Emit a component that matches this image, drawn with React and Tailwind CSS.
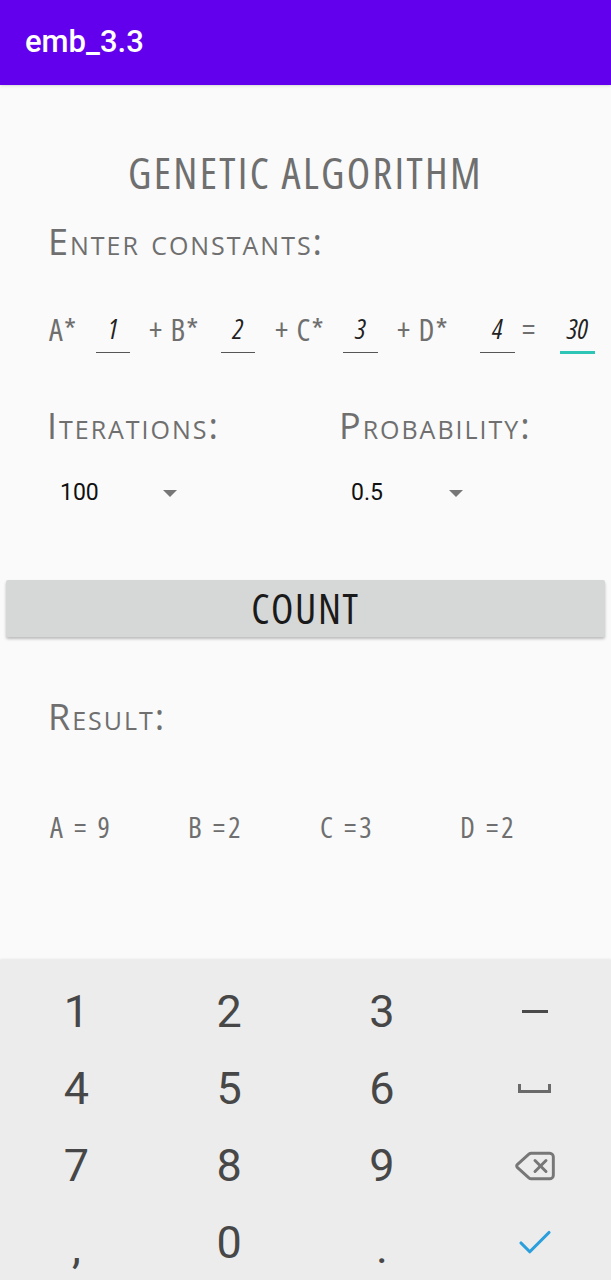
import { Check, Delete } from "lucide-react";

const cond = "font-['Open_Sans',sans-serif] [font-stretch:75%]";
const caps = "[font-stretch:100%] [font-variant:small-caps] text-[36px] leading-[46px] tracking-[0.055em]";

const Field = ({ value, w = "w-[34px]", active }) => (
  <div className={`${w} flex flex-col items-center`}>
    <span className="italic text-[27px] leading-[36px] tracking-normal text-[#222]">{value}</span>
    <div className={active ? "mt-[4px] h-[3px] w-full bg-[#2ec4b6]" : "mt-[5px] h-px w-full bg-[#555]"} />
  </div>
);

const Spinner = ({ value, w = "w-[103px]" }) => (
  <div className="flex items-center">
    <span className={`${w} font-['Roboto'] text-[23px] tracking-normal text-[#111] [font-stretch:100%] [font-variant:normal]`}>
      {value}
    </span>
    <span className="h-0 w-0 border-x-[7px] border-t-[7px] border-x-transparent border-t-[#777]" />
  </div>
);

const Key = ({ children }) => (
  <div className="flex h-[77px] items-center justify-center font-['Roboto'] text-[45px] text-[#474747]">
    {children}
  </div>
);

export default function App() {
  return (
    <div className="flex h-[1280px] w-[611px] flex-col bg-[#fafafa]">
      {/* app bar */}
      <header className="flex h-[85px] items-center bg-[#6200ee] px-[25px] shadow">
        <h1 className="font-['Roboto'] text-[31px] font-medium text-white">emb_3.3</h1>
      </header>

      <main className={`${cond} flex flex-1 flex-col text-[#6f6f6f]`}>
        <h2 className="mt-[60px] text-center text-[43px] leading-[56px] tracking-[0.055em]">GENETIC ALGORITHM</h2>

        <p className={`mt-[18px] pl-[48px] ${caps}`}>Enter constants:</p>

        <div className="mt-[46px] flex items-start pl-[49px] text-[31px] leading-[36px] tracking-[0.04em]">
          <span className="w-[47px]">A*</span>
          <Field value="1" />
          <span className="w-[91px] pl-[19px]">+ B*</span>
          <Field value="2" />
          <span className="w-[88px] pl-[20px]">+ C*</span>
          <Field value="3" w="w-[35px]" />
          <span className="w-[102px] pl-[19px]">+ D*</span>
          <Field value="4" w="w-[35px]" />
          <span className="w-[45px] pl-[7px]">=</span>
          <Field value="30" w="w-[35px]" active />
        </div>

        <div className="mt-[49px] flex">
          <div className="w-[339px] pl-[47px]">
            <p className={caps}>Iterations:</p>
            <div className="mt-[27px] pl-[13px]">
              <Spinner value="100" />
            </div>
          </div>
          <div>
            <p className={caps}>Probability:</p>
            <div className="mt-[27px] pl-[12px]">
              <Spinner value="0.5" w="w-[98px]" />
            </div>
          </div>
        </div>

        <button className="mx-[6px] mt-[69px] h-[57px] rounded-[2px] bg-[#d6d7d7] text-[41px] leading-[57px] tracking-[0.04em] text-[#1a1a1a] shadow-[0_2px_3px_rgba(0,0,0,0.25)]">
          COUNT
        </button>

        <p className={`mt-[57px] pl-[48px] ${caps}`}>Result:</p>

        <div className="mt-[69px] flex text-[29px] leading-[36px] tracking-[0.1em]">
          <span className="w-[188px] pl-[50px]">A = 9</span>
          <span className="w-[132px]">B =2</span>
          <span className="w-[140px]">C =3</span>
          <span>D =2</span>
        </div>
      </main>

      {/* numeric keyboard */}
      <div className="grid h-[320px] grid-cols-4 bg-[#ececec] pt-[13px] shadow-[0_-1px_2px_rgba(0,0,0,0.08)]">
        <Key>1</Key>
        <Key>2</Key>
        <Key>3</Key>
        <Key>
          <span className="h-[3px] w-[26px] bg-[#4a4a4a]" />
        </Key>
        <Key>4</Key>
        <Key>5</Key>
        <Key>6</Key>
        <Key>
          <span className="h-[9px] w-[33px] border-x-[3px] border-b-[3px] border-[#6a6a6a]" />
        </Key>
        <Key>7</Key>
        <Key>8</Key>
        <Key>9</Key>
        <Key>
          <Delete className="h-[44px] w-[44px] text-[#777]" strokeWidth={1.6} />
        </Key>
        <Key>
          <span className="mt-[10px]">,</span>
        </Key>
        <Key>0</Key>
        <Key>
          <span className="mt-[10px]">.</span>
        </Key>
        <Key>
          <Check className="h-[42px] w-[42px] text-[#2b9fdc]" strokeWidth={1.8} />
        </Key>
      </div>
    </div>
  );
}
